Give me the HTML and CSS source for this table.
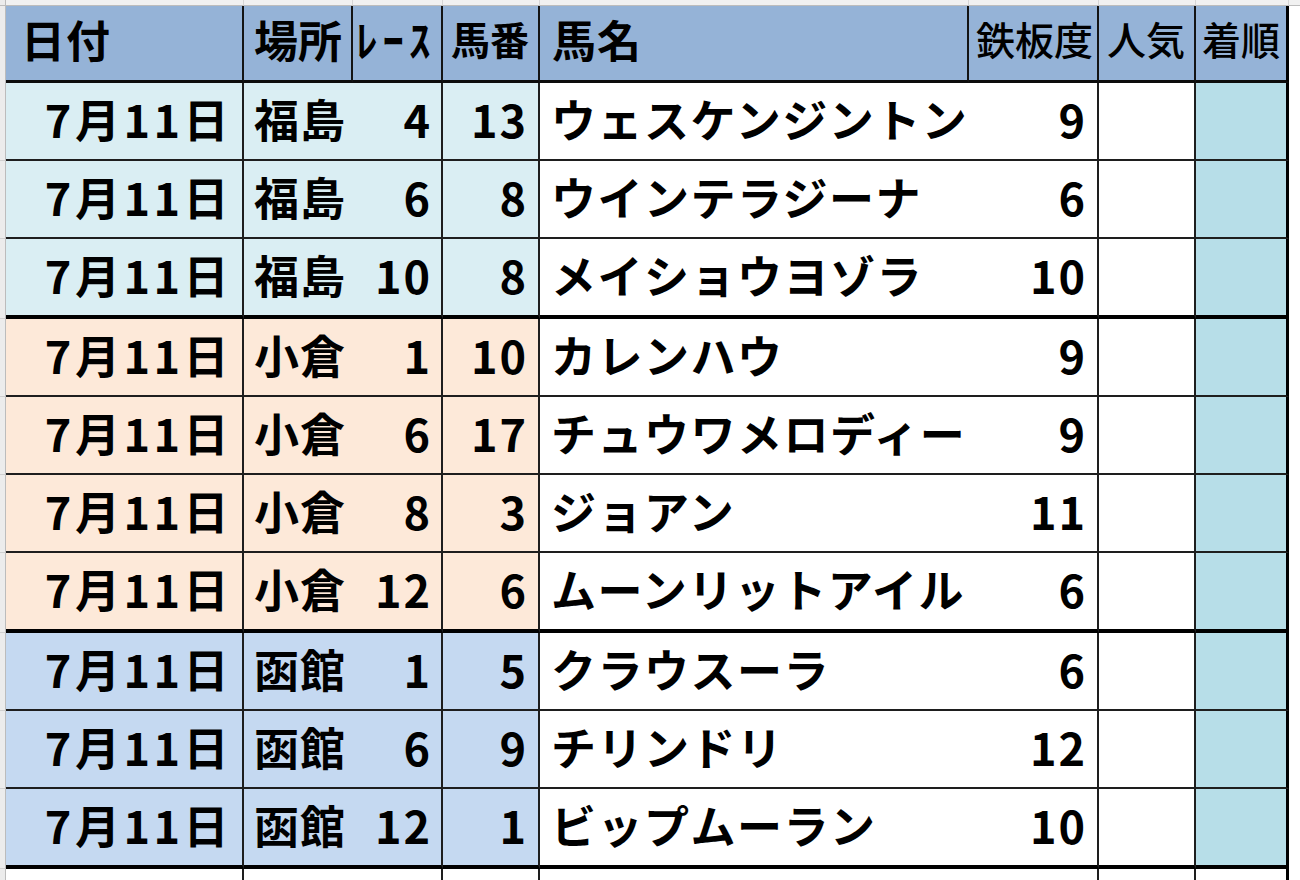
FILE: index.html
```html
<!DOCTYPE html>
<html lang="ja">
<head>
<meta charset="utf-8">
<title>鉄板馬リスト</title>
<link rel="stylesheet" href="styles.css">
</head>
<body>
<table class="sheet">
  <colgroup>
    <col class="w-gut"><col class="w-date"><col class="w-place"><col class="w-race"><col class="w-num"><col class="w-name"><col class="w-score"><col class="w-pop"><col class="w-rank"><col class="w-rest">
  </colgroup>
  <tr class="ghost">
    <td class="gut"></td><td></td><td></td><td></td><td></td><td></td><td></td><td></td><td></td><td class="rest"></td>
  </tr>
  <tr class="head">
    <td class="gut"></td>
    <th class="h-date">日付</th>
    <th class="h-place">場所</th>
    <th class="h-race">ﾚｰｽ</th>
    <th class="h-num">馬番</th>
    <th class="h-name">馬名</th>
    <th class="h-score">鉄板度</th>
    <th class="h-pop">人気</th>
    <th class="h-rank">着順</th>
    <td class="rest"></td>
  </tr>

  <tr class="row fuku">
    <td class="gut"></td><td class="date">7月11日</td><td class="place">福島</td><td class="race">4</td><td class="num">13</td><td class="name">ウェスケンジントン</td><td class="score">9</td><td class="pop"></td><td class="rank"></td><td class="rest"></td>
  </tr>
  <tr class="row fuku">
    <td class="gut"></td><td class="date">7月11日</td><td class="place">福島</td><td class="race">6</td><td class="num">8</td><td class="name">ウインテラジーナ</td><td class="score">6</td><td class="pop"></td><td class="rank"></td><td class="rest"></td>
  </tr>
  <tr class="row fuku end">
    <td class="gut"></td><td class="date">7月11日</td><td class="place">福島</td><td class="race">10</td><td class="num">8</td><td class="name">メイショウヨゾラ</td><td class="score">10</td><td class="pop"></td><td class="rank"></td><td class="rest"></td>
  </tr>

  <tr class="row koku">
    <td class="gut"></td><td class="date">7月11日</td><td class="place">小倉</td><td class="race">1</td><td class="num">10</td><td class="name">カレンハウ</td><td class="score">9</td><td class="pop"></td><td class="rank"></td><td class="rest"></td>
  </tr>
  <tr class="row koku">
    <td class="gut"></td><td class="date">7月11日</td><td class="place">小倉</td><td class="race">6</td><td class="num">17</td><td class="name">チュウワメロディー</td><td class="score">9</td><td class="pop"></td><td class="rank"></td><td class="rest"></td>
  </tr>
  <tr class="row koku">
    <td class="gut"></td><td class="date">7月11日</td><td class="place">小倉</td><td class="race">8</td><td class="num">3</td><td class="name">ジョアン</td><td class="score">11</td><td class="pop"></td><td class="rank"></td><td class="rest"></td>
  </tr>
  <tr class="row koku end">
    <td class="gut"></td><td class="date">7月11日</td><td class="place">小倉</td><td class="race">12</td><td class="num">6</td><td class="name">ムーンリットアイル</td><td class="score">6</td><td class="pop"></td><td class="rank"></td><td class="rest"></td>
  </tr>

  <tr class="row hako">
    <td class="gut"></td><td class="date">7月11日</td><td class="place">函館</td><td class="race">1</td><td class="num">5</td><td class="name">クラウスーラ</td><td class="score">6</td><td class="pop"></td><td class="rank"></td><td class="rest"></td>
  </tr>
  <tr class="row hako">
    <td class="gut"></td><td class="date">7月11日</td><td class="place">函館</td><td class="race">6</td><td class="num">9</td><td class="name">チリンドリ</td><td class="score">12</td><td class="pop"></td><td class="rank"></td><td class="rest"></td>
  </tr>
  <tr class="row hako end">
    <td class="gut"></td><td class="date">7月11日</td><td class="place">函館</td><td class="race">12</td><td class="num">1</td><td class="name">ビップムーラン</td><td class="score">10</td><td class="pop"></td><td class="rank"></td><td class="rest"></td>
  </tr>

  <tr class="tail">
    <td class="gut"></td><td class="date"></td><td class="place"></td><td class="race"></td><td class="num"></td><td class="name"></td><td class="score"></td><td class="pop"></td><td class="rank"></td><td class="rest"></td>
  </tr>
</table>
</body>
</html>
```

FILE: styles.css
```css
html, body {
  margin: 0;
  padding: 0;
  background: #ffffff;
}

body {
  width: 1300px;
  height: 880px;
  overflow: hidden;
  font-family: "Noto Sans CJK JP", "Noto Sans", sans-serif;
  color: #000;
}

.sheet {
  table-layout: fixed;
  border-collapse: separate;
  border-spacing: 0;
  width: 1300px;
}

.sheet td,
.sheet th {
  box-sizing: border-box;
  padding: 0;
  margin: 0;
  overflow: hidden;
  white-space: nowrap;
  font-weight: 700;
  font-size: 45px;
  line-height: 1;
  letter-spacing: 1px;
}

/* column widths */
.w-gut   { width: 6px; }
.w-date  { width: 238px; }
.w-place { width: 109px; }
.w-race  { width: 90px; }
.w-num   { width: 97px; }
.w-name  { width: 429px; }
.w-score { width: 130px; }
.w-pop   { width: 97px; }
.w-rank  { width: 93px; }
.w-rest  { width: 11px; }

/* gutter / outside area */
.sheet .gut {
  background: #ececec;
  border-right: 1px solid #bcbcbc;
}
.sheet .rest {
  background: #ffffff;
}

/* top strip: previous spreadsheet row */
.ghost td {
  height: 6px;
  background: #f1f1f1;
  border-right: 1px solid #d6d6d6;
  border-bottom: 1px solid #bdbdbd;
}
.ghost td.rest {
  border-right: none;
  background: #f1f1f1;
}

/* header */
.head th {
  height: 77px;
  background: #95b3d7;
  border-right: 2px solid #141414;
  border-bottom: 3px solid #0c0c0c;
  text-align: left;
  vertical-align: middle;
  padding: 0 0 9px 10px;
}
.head .h-date  { padding-left: 15px; font-size: 44px; }
.head .h-place { font-size: 44px; letter-spacing: 0; }
.head .h-race  { padding-left: 3px; letter-spacing: 5px; font-size: 43px; }
.head .h-num   { padding-left: 8px; font-size: 39px; font-weight: 600; letter-spacing: 0; }
.head .h-name  { padding-left: 12px; font-size: 44px; }
.head .h-score { padding-left: 7px; font-size: 39px; font-weight: 500; letter-spacing: 0; }
.head .h-pop   { padding-left: 8px; font-size: 39px; font-weight: 500; letter-spacing: 0; }
.head .h-rank  { padding-left: 6px; font-size: 39px; font-weight: 500; letter-spacing: 0; border-right: 3px solid #000; }
.head .rest    { border-bottom: none; }

/* data rows */
.row td {
  height: 78px;
  border-bottom: 2px solid #1e1e1e;
  vertical-align: middle;
  padding-bottom: 6px;
}
.row.end td {
  height: 80px;
  border-bottom: 4px solid #000;
}
.row td.gut {
  border-bottom: 1px solid #d0d0d0;
}
.row td.rest {
  border-bottom: none;
}

.fuku .date, .fuku .place, .fuku .race, .fuku .num { background: #daeef3; }
.koku .date, .koku .place, .koku .race, .koku .num { background: #fde9d9; }
.hako .date, .hako .place, .hako .race, .hako .num { background: #c5d9f1; }

.sheet .date {
  text-align: right;
  padding-right: 10px;
  letter-spacing: 3.5px;
  border-right: 2px solid #1e1e1e;
}
.sheet .place {
  text-align: left;
  padding-left: 10px;
}
.sheet .race {
  text-align: right;
  padding-right: 9px;
  letter-spacing: 2px;
  border-right: 2px solid #1e1e1e;
}
.sheet .num {
  text-align: right;
  padding-right: 10px;
  letter-spacing: 2px;
  border-right: 2px solid #1e1e1e;
}
.sheet .name {
  text-align: left;
  padding-left: 11px;
  letter-spacing: 1.5px;
  background: #ffffff;
}
.sheet .score {
  text-align: right;
  padding-right: 10px;
  letter-spacing: 2px;
  border-right: 2px solid #1e1e1e;
  background: #ffffff;
}
.sheet .pop {
  border-right: 2px solid #1e1e1e;
  background: #ffffff;
}
.sheet .rank {
  background: #b7dee8;
  border-right: 3px solid #000;
}

/* bottom strip: next spreadsheet row */
.tail td {
  height: 11px;
  background: #ffffff;
}
.tail td.gut {
  background: #ececec;
}
.tail td.rank {
  background: #ffffff;
}
```
